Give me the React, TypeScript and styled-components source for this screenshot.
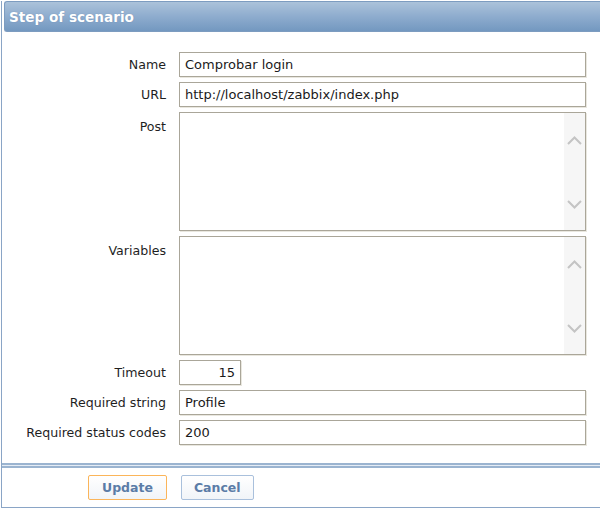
import React from 'react'
import styled, { createGlobalStyle } from 'styled-components'

const GlobalStyle = createGlobalStyle`
  html, body {
    margin: 0;
    padding: 0;
    background: #ffffff;
    font-family: "DejaVu Sans", Tahoma, Verdana, sans-serif;
    font-size: 12.6px;
    color: #1f1f1f;
  }
`

const Frame = styled.div`
  width: 598px;
  margin-left: 1px;
  border-left: 1px solid #8aa5c6;
  border-bottom: 1px solid #8aa5c6;
  background: #ffffff;
`

const Header = styled.div`
  margin: 1px 0 0 2px;
  height: 29px;
  display: flex;
  align-items: center;
  padding-left: 4px;
  border: 1px solid #7d9cc0;
  border-right: none;
  border-radius: 3px 0 0 3px;
  background: linear-gradient(to bottom, #abc2da 0%, #8eacce 50%, #7398c0 100%);
  color: #ffffff;
  font-weight: bold;
  font-size: 13.6px;
  text-shadow: 0 0 1px rgba(60, 90, 130, 0.4);
`

const Form = styled.div`
  display: grid;
  grid-template-columns: 164px 407px;
  column-gap: 13px;
  row-gap: 5px;
  padding: 20px 0 18px 0;
`

const Label = styled.div<{ $top?: boolean }>`
  text-align: right;
  align-self: ${p => (p.$top ? 'start' : 'center')};
  padding-top: ${p => (p.$top ? '7px' : '0')};
  white-space: nowrap;
`

const Input = styled.input<{ $w?: number; $right?: boolean }>`
  box-sizing: border-box;
  width: ${p => (p.$w ? `${p.$w}px` : '100%')};
  height: 25px;
  margin: 0;
  padding: 0 5px;
  border: 1px solid #aaa699;
  box-shadow: 1px 1px 0 #e9e7df;
  font-family: inherit;
  font-size: 13px;
  color: #1a1a1a;
  text-align: ${p => (p.$right ? 'right' : 'left')};
  outline: none;
`

const TextBox = styled.div`
  box-sizing: border-box;
  height: 119px;
  display: flex;
  border: 1px solid #aaa699;
  box-shadow: 1px 1px 0 #e9e7df;
`

const Area = styled.textarea`
  flex: 1;
  border: none;
  margin: 0;
  padding: 4px 5px;
  resize: none;
  outline: none;
  font-family: inherit;
  font-size: 13px;
  overflow: hidden;
`

const Gutter = styled.div`
  width: 21px;
  background: #f6f6f6;
  display: flex;
  flex-direction: column;
  justify-content: space-between;
  align-items: center;
  padding: 23px 0 21px 0;
`

const Separator = styled.div`
  height: 1px;
  border-top: 2px solid #9bb4d0;
  border-bottom: 2px solid #9bb4d0;
  background: #e4ecf5;
`

const Footer = styled.div`
  display: flex;
  gap: 14px;
  padding: 7px 0 7px 86px;
`

const Button = styled.button<{ $primary?: boolean }>`
  height: 25px;
  padding: 0 ${p => (p.$primary ? '13px' : '12px')};
  border: 1px solid ${p => (p.$primary ? '#fbb55a' : '#a9c0dc')};
  border-radius: 2px;
  background: linear-gradient(to bottom, #ffffff 0%, #f1f4f8 100%);
  color: #5b7ca7;
  font-family: inherit;
  font-weight: bold;
  font-size: 12.5px;
  cursor: pointer;
`

const Chevron = ({ up }: { up?: boolean }) => (
  <svg width="15" height="9" viewBox="0 0 15 9">
    <path
      d={up ? 'M1 8 L7.5 1.5 L14 8' : 'M1 1 L7.5 7.5 L14 1'}
      fill="none"
      stroke="#c4c4c4"
      strokeWidth="2"
    />
  </svg>
)

const ScrollText = () => (
  <TextBox>
    <Area />
    <Gutter>
      <Chevron up />
      <Chevron />
    </Gutter>
  </TextBox>
)

export default function App() {
  return (
    <>
      <GlobalStyle />
      <Frame>
        <Header>Step of scenario</Header>
        <Form>
          <Label>Name</Label>
          <Input defaultValue="Comprobar login" />

          <Label>URL</Label>
          <Input defaultValue="http://localhost/zabbix/index.php" />

          <Label $top>Post</Label>
          <ScrollText />

          <Label $top>Variables</Label>
          <ScrollText />

          <Label>Timeout</Label>
          <Input $w={62} $right defaultValue="15" />

          <Label>Required string</Label>
          <Input defaultValue="Profile" />

          <Label>Required status codes</Label>
          <Input defaultValue="200" />
        </Form>
        <Separator />
        <Footer>
          <Button $primary>Update</Button>
          <Button>Cancel</Button>
        </Footer>
      </Frame>
    </>
  )
}
